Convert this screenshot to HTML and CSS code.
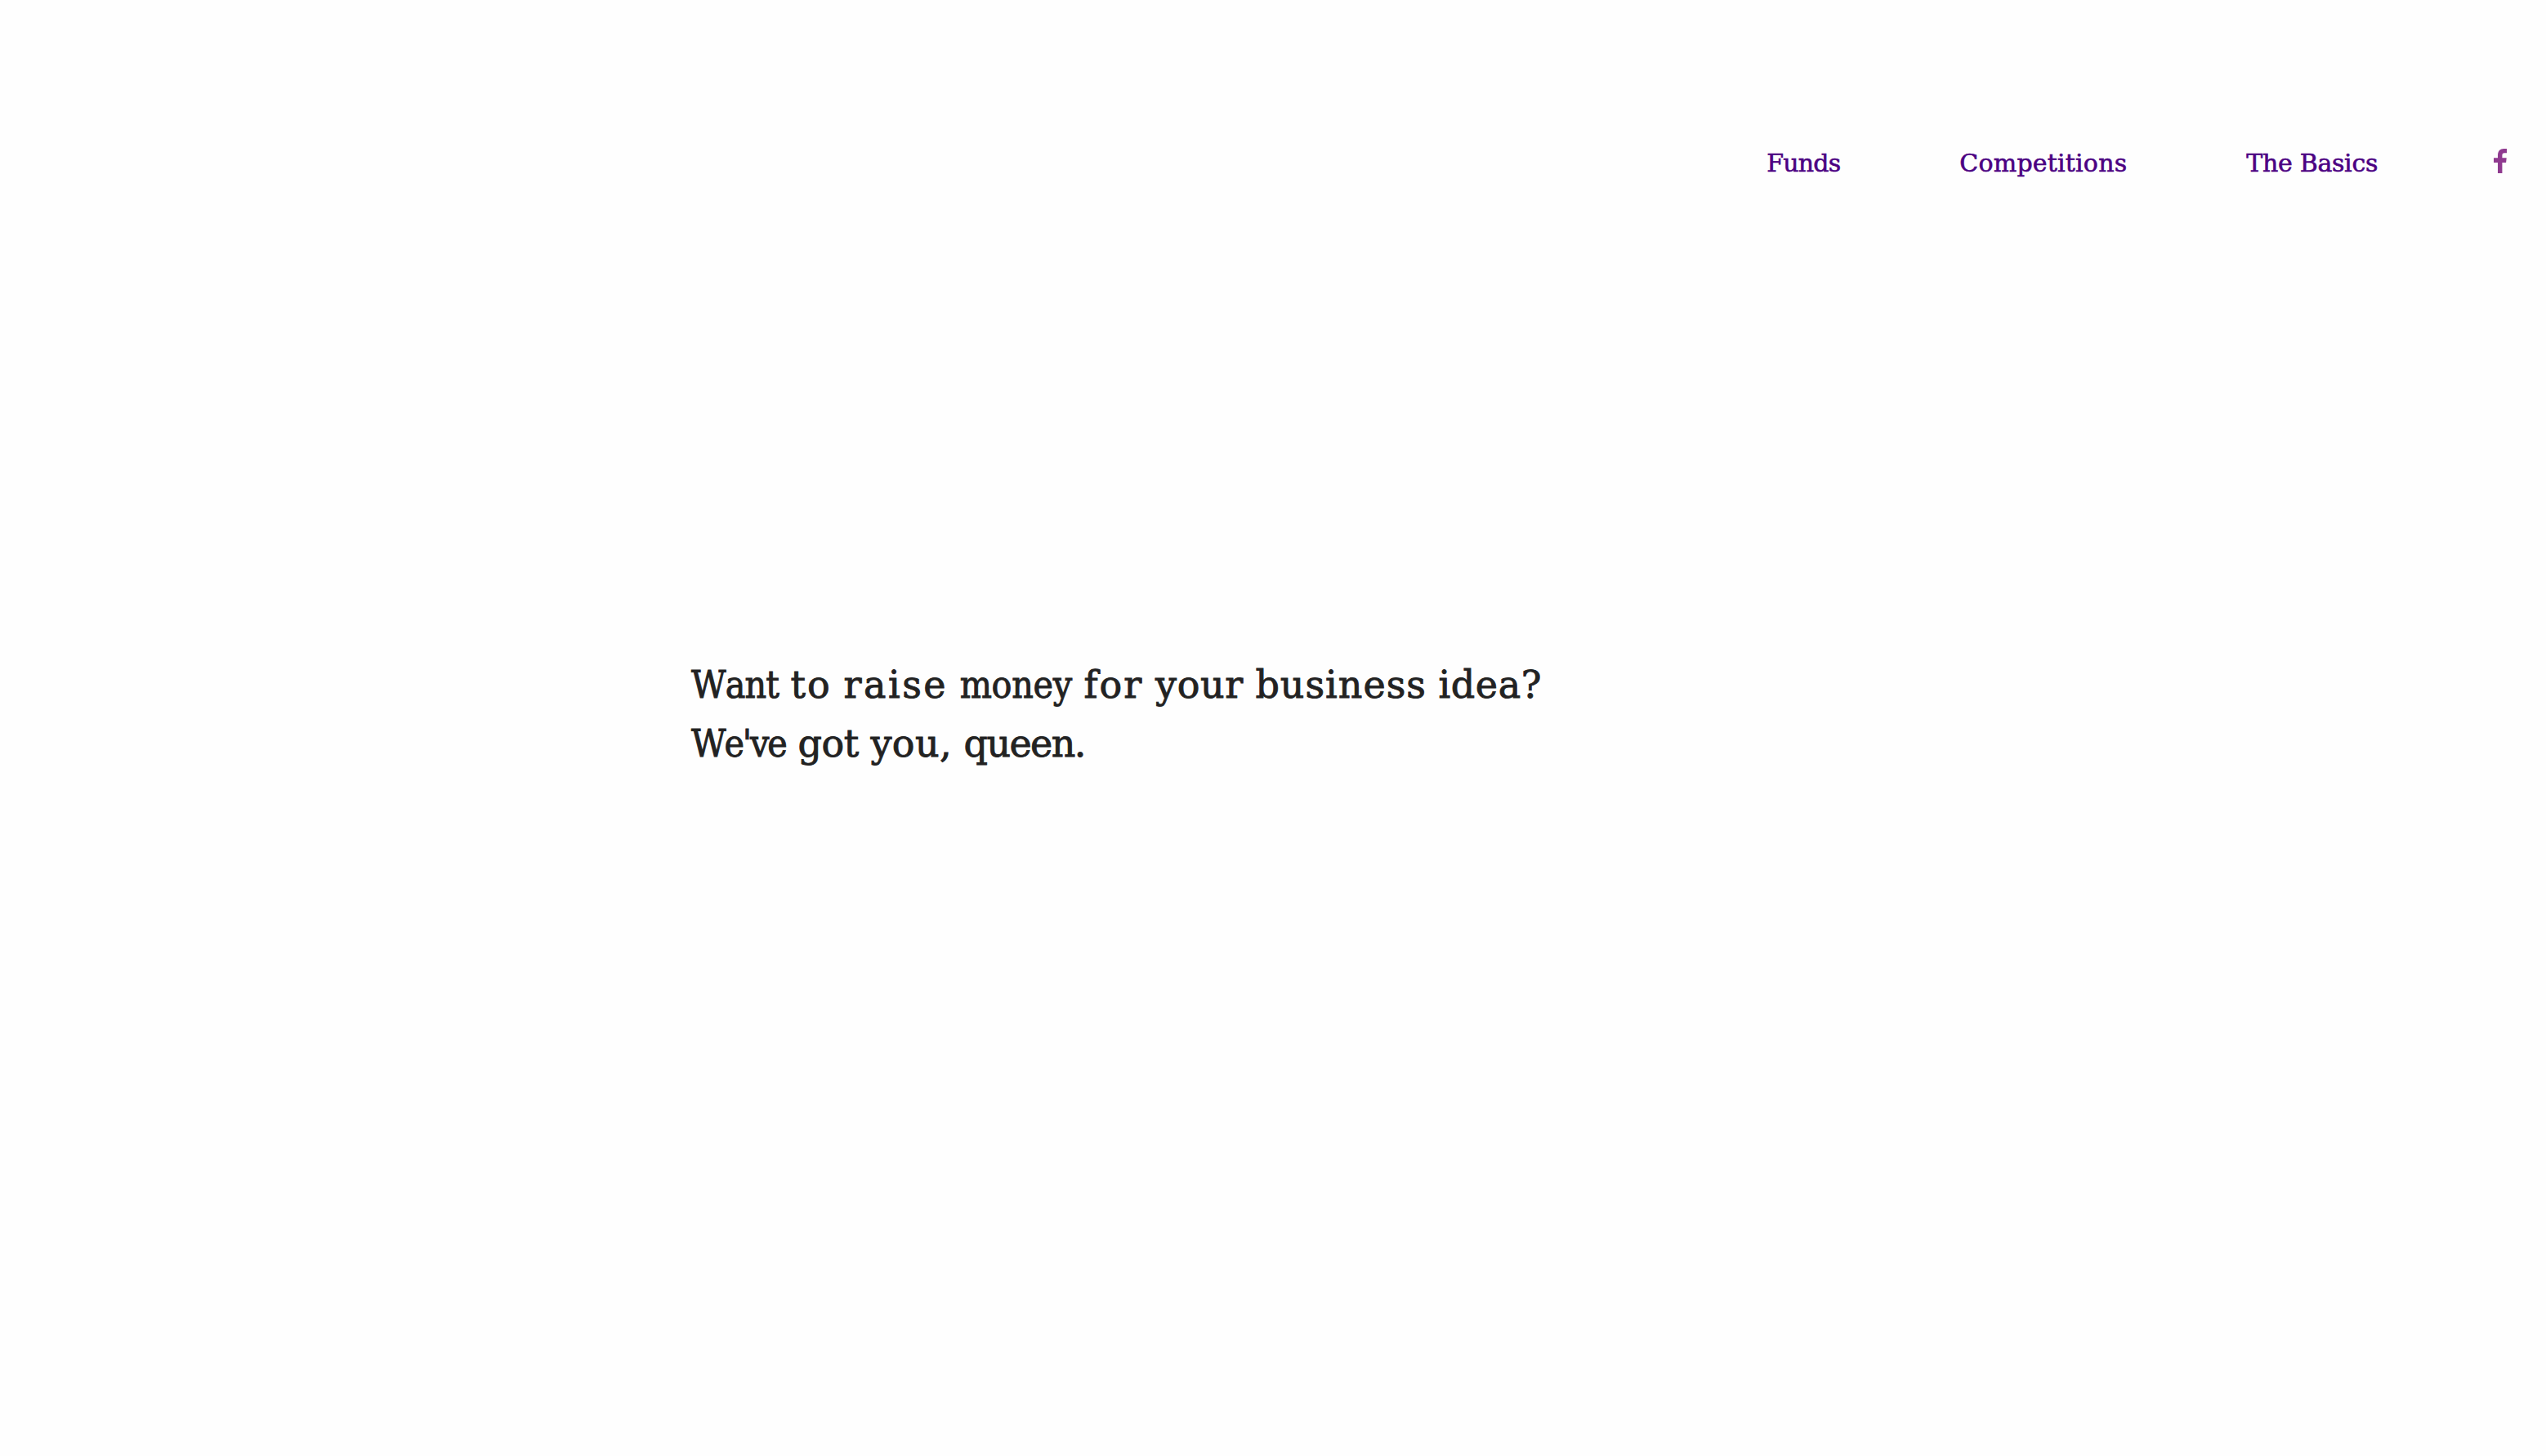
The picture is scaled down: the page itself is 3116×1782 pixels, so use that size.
FILE: index.html
```html
<!DOCTYPE html>
<html lang="en">
<head>
<meta charset="utf-8">
<title>Funds</title>
<link rel="stylesheet" href="styles.css">
</head>
<body>
<header class="site-header">
  <nav class="nav">
    <a class="nav-link tight" href="#">Funds</a>
    <a class="nav-link open" href="#">Competitions</a>
    <a class="nav-link snug" href="#">The Basics</a>
  </nav>
  <a class="social" href="#" aria-label="Facebook">
    <svg class="social-icon" viewBox="0 0 16 30" width="16" height="30"><path d="M5 30V17H0V11.3H5V8.2C5 2.8 7.8 0 12.5 0H16V5.2H13.3C11 5.2 10.4 6.2 10.4 8.2V11.3H15.7L15.1 17H10.4V30Z"/></svg>
  </a>
</header>
<main class="hero">
  <h1 class="headline"><span class="narrow w-want">Want</span> <span class="w-open">to</span> <span class="w-raise">raise</span> <span class="narrow w-money">money</span> <span class="w-open">for</span> <span class="w-your">your</span> <span class="w-business">business</span> <span class="w-your">idea?</span><br><span class="narrow w-weve">We've</span> <span class="w-got">got</span> <span class="w-you">you,</span> <span class="w-queen">queen.</span></h1>
</main>
</body>
</html>
```
FILE: styles.css
```css
body {
  margin: 0;
  min-height: 1782px;
  background: #fefefe;
  font-family: "DejaVu Serif", serif;
  font-kerning: none;
}

.site-header {
  display: flex;
  justify-content: flex-end;
  align-items: flex-start;
  gap: 142px;
  padding: 180px 48px 0 0;
  height: 802px;
  box-sizing: border-box;
}

.nav {
  display: flex;
  gap: 146px;
}

.nav-link {
  color: #4b0082;
  font-size: 30px;
  line-height: 40px;
  text-decoration: none;
  white-space: nowrap;
  -webkit-text-stroke: 0.6px #4b0082;
}

.tight { letter-spacing: -0.8px; }
.open { letter-spacing: 0.2px; }
.snug { letter-spacing: -0.3px; }

.social {
  display: block;
  padding-top: 2px;
}

.social-icon {
  display: block;
  fill: #8f3a8f;
}

.hero {
  padding-left: 846px;
}

.headline {
  margin: 0;
  color: #222;
  font-size: 46px;
  font-weight: 400;
  line-height: 72px;
  white-space: nowrap;
  -webkit-text-stroke: 0.9px #222;
}

.narrow { font-family: "DejaVu Serif Condensed", "DejaVu Serif", serif; font-stretch: condensed; }
.w-want { letter-spacing: -0.9px; }
.w-open { letter-spacing: 2.1px; }
.w-raise { letter-spacing: 2.5px; }
.w-money { letter-spacing: -0.3px; }
.w-your { letter-spacing: 0.6px; }
.w-business { letter-spacing: 1px; }
.w-weve { letter-spacing: -2.1px; }
.w-got { letter-spacing: -0.4px; }
.w-you { letter-spacing: 0.4px; }
.w-queen { letter-spacing: -1.6px; }
```
